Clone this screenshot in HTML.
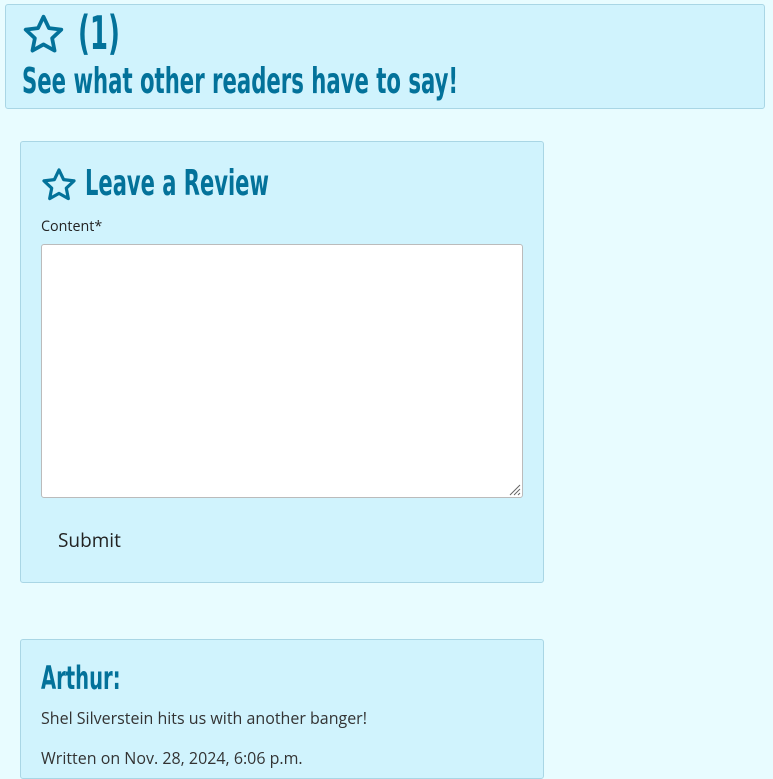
<!DOCTYPE html>
<html><head><style>
body{margin:0;background:#e8fcff;width:773px;height:769px;overflow:hidden;font-family:"Open Sans","DejaVu Sans",sans-serif;color:#222}
.h{font-family:"DejaVu Sans Condensed","DejaVu Sans",sans-serif;font-weight:bold;color:#03729a;transform-origin:left center;white-space:nowrap}
.p{position:absolute;background:#d0f3fd;border:1px solid #a9d6e5;border-radius:3px;box-sizing:border-box}
svg{position:absolute}
</style></head><body>
<div class="p" style="left:5px;top:4px;width:760px;height:105px">
<svg style="left:15px;top:7px" width="45" height="45" viewBox="0 0 24 24"><path d="M12 2.5l2.9 6.1 6.6.8-4.9 4.6 1.3 6.6L12 17.3l-5.9 3.3 1.3-6.6-4.9-4.6 6.6-.8z" fill="none" stroke="#03729a" stroke-width="2" stroke-linejoin="round"/></svg>
<div class="h" style="position:absolute;left:72px;top:3px;font-size:46px;line-height:50px;transform:scaleX(0.63)">(1)</div>
<div class="h" style="position:absolute;left:16px;top:57px;font-size:36px;line-height:40px;transform:scaleX(0.655)">See what other readers have to say!</div>
</div>
<div class="p" style="left:20px;top:141px;width:524px;height:442px">
<svg style="left:19px;top:24px" width="38" height="38" viewBox="0 0 24 24"><path d="M12 2.5l2.9 6.1 6.6.8-4.9 4.6 1.3 6.6L12 17.3l-5.9 3.3 1.3-6.6-4.9-4.6 6.6-.8z" fill="none" stroke="#03729a" stroke-width="2" stroke-linejoin="round"/></svg>
<div class="h" style="position:absolute;left:64px;top:21px;font-size:36px;line-height:42px;transform:scaleX(0.65)">Leave a Review</div>
<div style="position:absolute;left:20px;top:75px;font-size:14.3px">Content*</div>
<div style="position:absolute;left:20px;top:102px;width:482px;height:254px;background:#fff;border:1px solid #bbb;border-radius:3px;box-sizing:border-box">
<svg style="right:1px;bottom:1px" width="14" height="14" viewBox="0 0 14 14"><path d="M13 3L3 13M13 7L7 13M13 11L11 13" stroke="#666" stroke-width="1"/></svg>
</div>
<div style="position:absolute;left:37px;top:385px;font-size:19px">Submit</div>
</div>
<div class="p" style="left:20px;top:639px;width:524px;height:140px">
<div class="h" style="position:absolute;left:20px;top:19px;font-size:32px;line-height:38px;transform:scaleX(0.68)">Arthur:</div>
<div style="position:absolute;left:20px;top:67px;font-size:16px;color:#333">Shel Silverstein hits us with another banger!</div>
<div style="position:absolute;left:20px;top:107px;font-size:16px;color:#333">Written on Nov. 28, 2024, 6:06 p.m.</div>
</div>
</body></html>
